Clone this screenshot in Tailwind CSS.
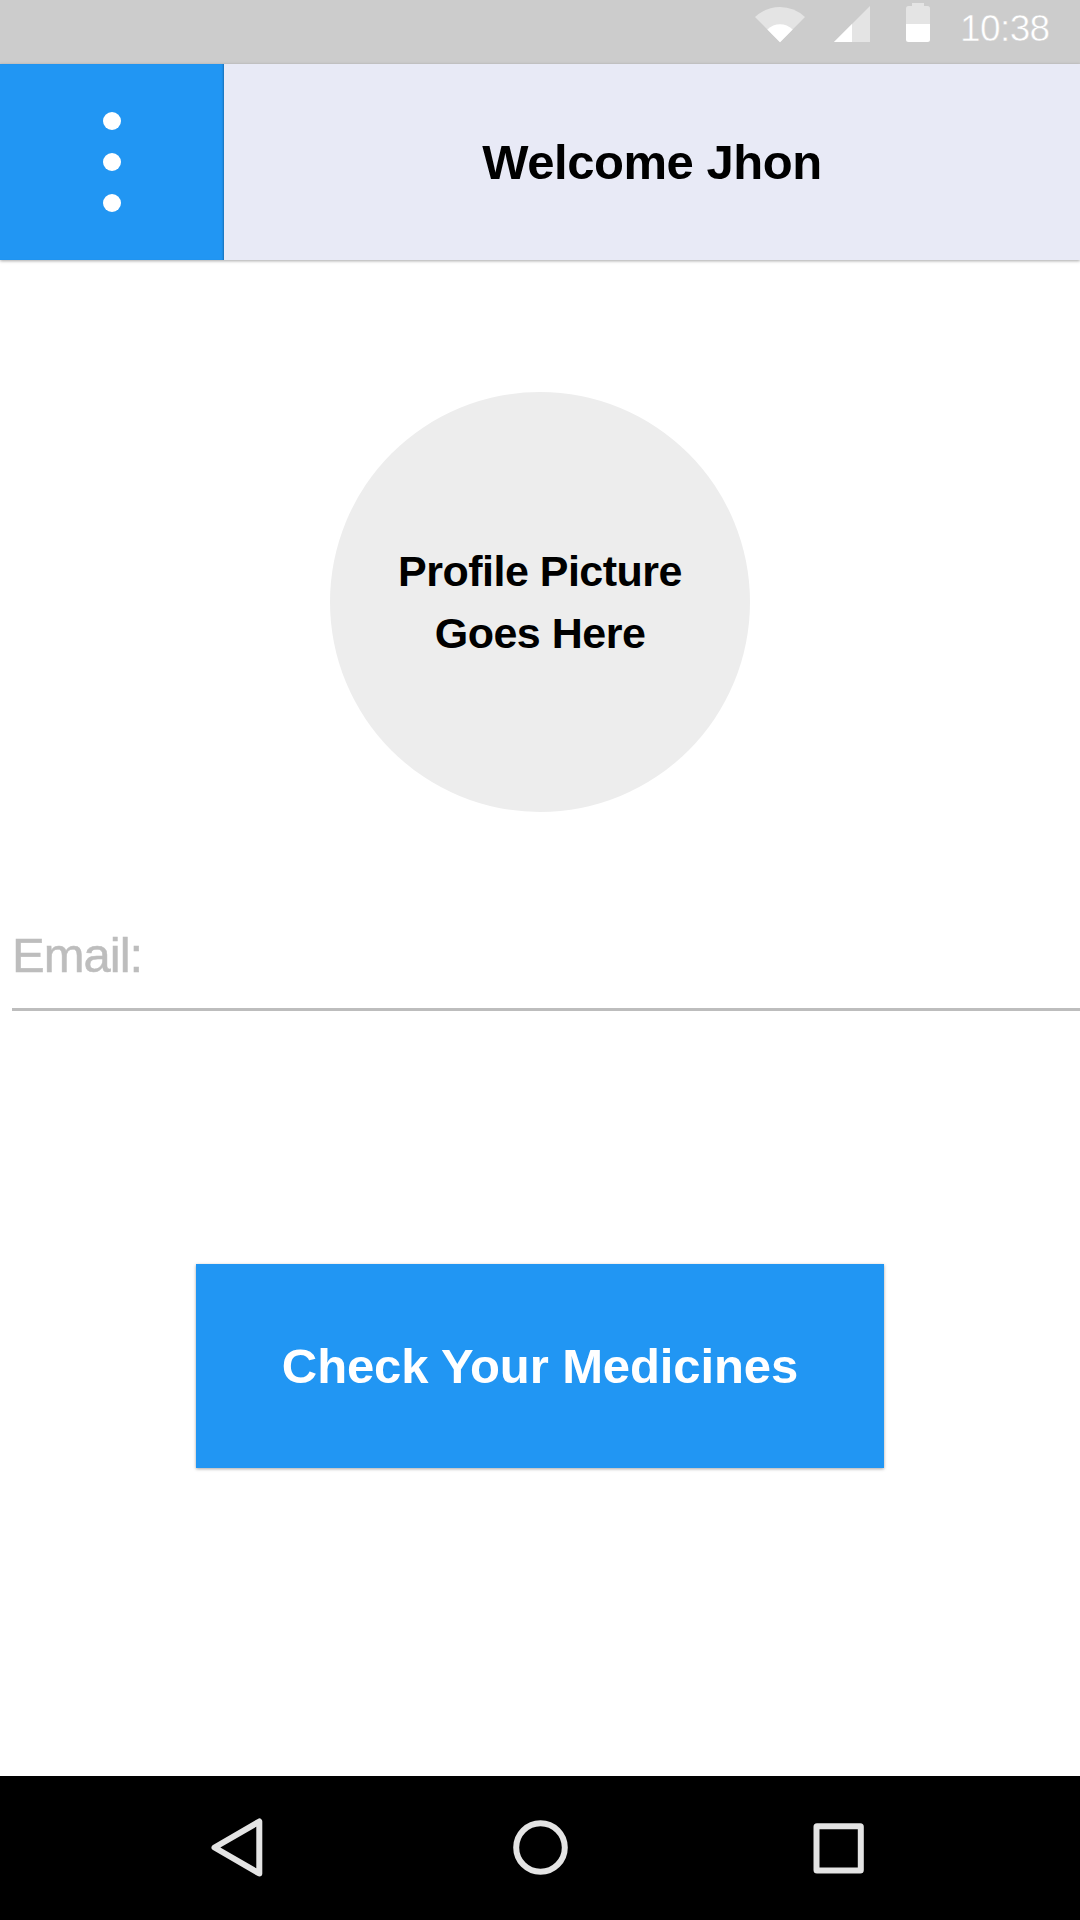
<!DOCTYPE html>
<html lang="en">
<head>
<meta charset="utf-8">
<title>Welcome</title>
<script src="https://cdn.jsdelivr.net/npm/@tailwindcss/browser@4"></script>
</head>
<body class="flex h-[1920px] w-[1080px] flex-col overflow-hidden bg-white font-['Liberation_Sans',Arial,sans-serif]">
  <div class="flex h-16 shrink-0 bg-[#cccccc] pl-[755px]">
    <svg class="h-16 w-[175px] shrink-0" viewBox="755 0 175 64" fill="#fff">
      <path fill="#e4e4e4" d="M755 17Q766 7 780 7T805 17L780 42.3Z"/>
      <path d="M767.3 29.5Q773 24.3 780 24.3T792.7 29.5L780 42.3Z"/>
      <path fill="#e4e4e4" d="M834 42L870 6V42Z"/>
      <path d="M834 42L852 24V42Z"/>
      <path fill="#e4e4e4" d="M912 3H924V6H927.5Q930 6 930 8.500V24H906V8.500Q906 6 908.500 6H912Z"/>
      <path d="M906 24H930V39.500Q930 42 927.500 42H908.500Q906 42 906 39.500Z"/>
    </svg>
    <span class="ml-[30px] mt-[9px] text-[37px] leading-10 tracking-[-0.6px] text-white [-webkit-text-stroke:0.5px_#cccccc]">10:38</span>
  </div>
  <header class="relative z-10 flex h-[196px] shrink-0 bg-[#e8eaf6] shadow-[0_1px_3px_rgba(0,0,0,0.35)]">
    <button class="flex w-56 flex-col items-center justify-center gap-[23px] bg-[#2196f3] shadow-[inset_-2px_0_2px_-1px_rgba(0,0,0,0.25)]">
      <span class="size-[18px] rounded-full bg-white"></span>
      <span class="size-[18px] rounded-full bg-white"></span>
      <span class="size-[18px] rounded-full bg-white"></span>
    </button>
    <h1 class="flex flex-1 items-center justify-center pt-px text-[49px] font-bold tracking-[-0.45px] text-black">Welcome Jhon</h1>
  </header>
  <main class="flex flex-1 flex-col items-center">
    <div class="mt-[132px] flex size-[420px] shrink-0 items-center justify-center rounded-full bg-[#ededed] text-center text-[43px] leading-[62px] font-bold tracking-[-0.5px] text-black">Profile Picture<br>Goes Here</div>
    <div class="mt-[110px] ml-3 h-[89px] w-[1068px] shrink-0 border-b-[3px] border-[#bdbdbd] text-[49px] leading-[66px] tracking-[-1px] text-[#bdbdbd] [-webkit-text-stroke:0.5px_#bdbdbd]">Email:</div>
    <button class="mt-[253px] h-[204px] w-[688px] shrink-0 bg-[#2196f3] pt-[2px] text-[49px] font-bold tracking-[-0.1px] text-white shadow-[0_1px_3px_rgba(0,0,0,0.35)]">Check Your Medicines</button>
  </main>
  <nav class="h-36 shrink-0 bg-black">
    <svg class="size-full" viewBox="0 0 1080 144" fill="none" stroke="#e4e4e4" stroke-width="6" stroke-linejoin="round">
      <path d="M214.500 71.500L259.300 45.500V97.500Z"/>
      <circle cx="540.500" cy="71.500" r="24.300"/>
      <rect x="816.500" y="50.300" width="44.300" height="44.300" rx="0.500"/>
    </svg>
  </nav>
</body>
</html>
